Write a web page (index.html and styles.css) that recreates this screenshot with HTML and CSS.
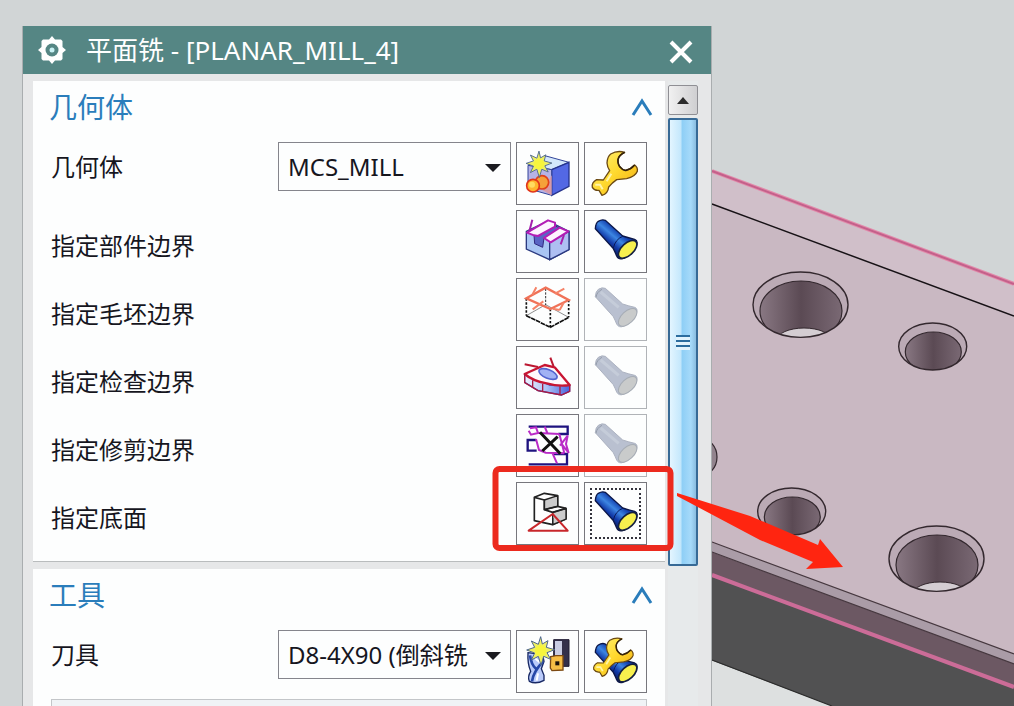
FILE: index.html
```html
<!DOCTYPE html>
<html lang="zh-CN">
<head>
<meta charset="utf-8">
<title>平面铣 - [PLANAR_MILL_4]</title>
<link rel="stylesheet" href="styles.css">
</head>
<body>
<svg class="defs" aria-hidden="true">
  <defs>
    <linearGradient id="barrel" x1="0.15" y1="0.7" x2="0.6" y2="0.2">
      <stop offset="0" stop-color="#081448"/><stop offset="0.35" stop-color="#123aa8"/><stop offset="0.6" stop-color="#3d86e2"/><stop offset="0.85" stop-color="#123fae"/>
    </linearGradient>
    <linearGradient id="gold" x1="0" y1="0" x2="1" y2="1">
      <stop offset="0" stop-color="#fff27a"/><stop offset="0.5" stop-color="#ffd92e"/><stop offset="1" stop-color="#f0a810"/>
    </linearGradient>
    <linearGradient id="blueside" x1="0" y1="0" x2="1" y2="0">
      <stop offset="0" stop-color="#f0f4ff"/><stop offset="0.5" stop-color="#a9c0f4"/><stop offset="1" stop-color="#4a62dc"/>
    </linearGradient>
    <linearGradient id="bore" x1="0" y1="0" x2="1" y2="0">
      <stop offset="0" stop-color="#897883"/><stop offset="0.5" stop-color="#5b4a54"/><stop offset="1" stop-color="#7a6974"/>
    </linearGradient>
    <symbol id="torch" viewBox="3 3 183 183">
      <path d="M34 56Q35 40 43 34Q54 27 64 31L116 78Q134 84 152 88Q162 92 158 104Q148 132 118 145Q104 150 98 138Q94 128 88 116Z" fill="url(#barrel)" stroke="#0c1748" stroke-width="4"/>
      <path d="M88 114Q94 88 116 79" fill="none" stroke="#0b1a5a" stroke-width="3"/>
      <ellipse cx="131" cy="118" rx="34" ry="18" transform="rotate(-43 131 118)" fill="#f7f04e" stroke="#152040" stroke-width="5"/>
    </symbol>
    <symbol id="torch-off" viewBox="3 3 183 183">
      <path d="M34 56Q35 40 43 34Q54 27 64 31L116 78Q134 84 152 88Q162 92 158 104Q148 132 118 145Q104 150 98 138Q94 128 88 116Z" fill="#b9c0d0" stroke="#adb3c1" stroke-width="3"/>
      <path d="M50 42L104 88" stroke="#c5ccd9" stroke-width="9" fill="none"/>
      <path d="M36 58Q38 42 54 34" stroke="#959dab" stroke-width="3" fill="none"/>
      <ellipse cx="131" cy="118" rx="34" ry="18" transform="rotate(-43 131 118)" fill="#c9cbcb" stroke="#a6acb5" stroke-width="3"/>
    </symbol>
    <symbol id="wrench" viewBox="3 3 183 183">
      <path d="M69 63Q70 44 80 36Q100 24 122 31Q104 40 102 53Q101 68 109 76Q118 87 126 85Q140 82 152 69Q162 76 160 88Q154 104 128 110L98 113Q85 122 74 135Q72 155 54 160L45 145Q32 147 25 136Q22 122 38 113L58 114L77 86Q70 76 69 63Z" fill="url(#gold)" stroke="#6b4a14" stroke-width="4" stroke-linejoin="round"/>
      <path d="M122 31Q104 40 102 53Q101 68 109 76Q118 87 126 85Q140 82 152 69" fill="none" stroke="#35230b" stroke-width="5"/>
      <path d="M82 95L68 118M34 128L48 128L56 142" stroke="#fff4a8" stroke-width="6" fill="none"/>
    </symbol>
    <symbol id="spark" viewBox="0 0 76 76" overflow="visible">
      <path d="M38 -4L43 18L60 8L55 28L80 35L57 44L68 64L47 55L39 82L31 55L10 66L20 45L-4 36L20 28L10 9L31 19Z" fill="#eef060" stroke="#4d6690" stroke-width="3"/>
      <circle cx="38" cy="38" r="17" fill="#f7f53c"/>
    </symbol>
    <symbol id="chevron" viewBox="0 0 22 18">
      <path d="M2 17L11 3L20 17" fill="none" stroke="#2a7dbb" stroke-width="3"/>
    </symbol>
  </defs>
</svg>

<svg class="scene" viewBox="0 0 1014 706" preserveAspectRatio="xMinYMin slice" role="img" aria-label="零件模型">
  <rect width="1014" height="706" fill="#d1d5d6"/>
  <path d="M600 618L832 706H600Z" fill="#dde0e0"/>
  <path d="M600 129L1014 284V706H832L600 618Z" fill="#515152"/>
  <path d="M600 129L1014 284V687L600 534Z" fill="#6c5863"/>
  <path d="M600 129L1014 284V664L600 511Z" fill="#aa9ca7"/>
  <path d="M600 129L1014 284V654L600 501Z" fill="#c9b8c2"/>
  <path d="M600 129L1014 284V316L600 162Z" fill="#d0bfc9"/>
  <path d="M712 171L1014 284" stroke="#e28bab" stroke-width="4"/>
  <path d="M712 171L1014 284" stroke="#c4608a" stroke-width="2"/>
  <path d="M712 204L1014 316" stroke="#171216" stroke-width="1.5"/>
  <path d="M712 542L1014 654M712 552L1014 664" stroke="#46383f" stroke-width="1.2"/>
  <path d="M712 575L1014 687" stroke="#cc6c98" stroke-width="4"/>
  <path d="M712 660L832 706" stroke="#2c2c2c" stroke-width="1.2"/>
  <ellipse cx="700" cy="457" rx="17" ry="19" fill="#92838d" stroke="#33282e" stroke-width="1.2"/>
  <clipPath id="c1"><ellipse cx="800.5" cy="304.7" rx="47.5" ry="32.7"/></clipPath>
  <clipPath id="c2"><ellipse cx="932.7" cy="346.5" rx="34" ry="23.5"/></clipPath>
  <g id="hole-large">
    <ellipse cx="800.5" cy="304.7" rx="47.5" ry="32.7" fill="#bbaab5"/>
    <g clip-path="url(#c1)">
      <ellipse cx="801" cy="311" rx="41" ry="30" fill="url(#bore)" stroke="#33282e" stroke-width="1.2"/>
      <ellipse cx="804" cy="340" rx="27" ry="12" fill="#d4cdd2" stroke="#33282e"/>
    </g>
    <ellipse cx="800.5" cy="304.7" rx="47.5" ry="32.7" fill="none" stroke="#33282e" stroke-width="1.4"/>
  </g>
  <g id="hole-small">
    <ellipse cx="932.7" cy="346.5" rx="34" ry="23.5" fill="#bbaab5"/>
    <g clip-path="url(#c2)">
      <ellipse cx="933.3" cy="352" rx="28" ry="20" fill="url(#bore)" stroke="#33282e" stroke-width="1.2"/>
    </g>
    <ellipse cx="932.7" cy="346.5" rx="34" ry="23.5" fill="none" stroke="#33282e" stroke-width="1.4"/>
  </g>
  <use href="#hole-large" x="136" y="254"/>
  <use href="#hole-small" x="-141" y="165"/>
</svg>

<div class="desktop">
  <main class="dialog">
    <header class="titlebar">
      <svg class="gear" viewBox="0 0 28 28" aria-hidden="true">
        <path d="M14 0L17 3.500L23 3.500L24.500 5L24.500 11L28 14L24.500 17L24.500 23L23 24.500L17 24.500L14 28L11 24.500L5 24.500L3.500 23L3.500 17L0 14L3.500 11L3.500 5L5 3.500L11 3.500Z" fill="#fff"/>
        <circle cx="14" cy="14" r="6.500" fill="#558684"/>
        <circle cx="14" cy="14" r="2.500" fill="#c8f1f4"/>
      </svg>
      <h1 class="title">平面铣 - [PLANAR_MILL_4]</h1>
      <button class="close" aria-label="关闭"><svg viewBox="0 0 24 24"><path d="M2 2L22 22M22 2L2 22" stroke="#fff" stroke-width="4"/></svg></button>
    </header>
    <div class="body">
      <div class="groups">
        <section class="group">
          <header class="group-head"><h2>几何体</h2><button class="fold" aria-label="折叠几何体"><svg><use href="#chevron"/></svg></button></header>
          <div class="row row-field">
            <label for="geometry">几何体</label>
            <span class="combo"><select id="geometry"><option>MCS_MILL</option></select></span>
            <button class="tool" aria-label="新建几何体"><svg viewBox="3 3 183 183">
              <path d="M36 70L90 42L159 61L107 83Z" fill="#d3e7fb" stroke="#33459a" stroke-width="3"/>
              <path d="M107 83L159 61V133L107 160Z" fill="#5368e4" stroke="#26338c" stroke-width="4"/>
              <path d="M36 70L107 83V160L36 140Z" fill="#b6b3e6" stroke="#33459a" stroke-width="3"/>
              <path d="M80 145L107 100V160Z" fill="#d89aa8"/>
              <circle cx="78" cy="121" r="20" fill="#f5a13a" stroke="#e0401a" stroke-width="5"/>
              <circle cx="51" cy="131" r="19" fill="#ffb52e" stroke="#e2351a" stroke-width="5"/>
              <circle cx="48" cy="128" r="9" fill="#ffdc61"/>
              <use href="#spark" x="34" y="28" width="70" height="76"/>
            </svg></button>
            <button class="tool" aria-label="编辑几何体"><svg><use href="#wrench"/></svg></button>
          </div>
          <div class="row">
            <span class="name">指定部件边界</span>
            <button class="tool" aria-label="选择部件边界"><svg viewBox="3 3 183 183">
              <path d="M31 64L96 33L159 64V119L101 149L31 117Z" fill="#a9c5f3" stroke="#2b3a80" stroke-width="4"/>
              <path d="M101 97V149L159 119V64Z" fill="#aebff2" stroke="#2b3a80" stroke-width="4"/>
              <path d="M54 76L117 48L131 53L84 84L80 112L56 101Z" fill="#5964c4" stroke="#322a80" stroke-width="3"/>
              <path d="M33 68L96 31L117 38V50L66 78L54 76Z" fill="#fdf4ff" stroke="#b31db5" stroke-width="6" stroke-linejoin="round"/>
              <path d="M84 84L131 53L157 64L104 97Z" fill="#fdf4ff" stroke="#b31db5" stroke-width="6" stroke-linejoin="round"/>
              <path d="M49 29L40 64M144 75L134 103" fill="none" stroke="#a51fad" stroke-width="6"/>
            </svg></button>
            <button class="tool" aria-label="显示部件边界"><svg><use href="#torch"/></svg></button>
          </div>
          <div class="row">
            <span class="name">指定毛坯边界</span>
            <button class="tool" aria-label="选择毛坯边界"><svg viewBox="3 3 183 183" fill="none">
              <path d="M31 113L89 80L158 118" stroke="#555" stroke-width="2"/>
              <path d="M31 113L103 148L158 118" stroke="#111" stroke-width="5" stroke-dasharray="14 2"/>
              <path d="M31 61V113M103 93V148M158 66V118" stroke="#111" stroke-width="5" stroke-dasharray="7 5"/>
              <path d="M89 32V82" stroke="#333" stroke-width="3" stroke-dasharray="7 4"/>
              <path d="M31 61L89 29L158 66L103 93Z" stroke="#f07258" stroke-width="7"/>
              <path d="M61 28L49 50M117 47L145 32M50 94L82 70M143 74L131 96M131 96L110 92" stroke="#f58368" stroke-width="6"/>
            </svg></button>
            <button class="tool" disabled aria-label="显示毛坯边界"><svg><use href="#torch-off"/></svg></button>
          </div>
          <div class="row">
            <span class="name">指定检查边界</span>
            <button class="tool" aria-label="选择检查边界"><svg viewBox="3 3 183 183">
              <path d="M26 84V109L66 134L136 147L161 136V117L101 117Z" fill="url(#blueside)" stroke="#3641aa" stroke-width="4"/>
              <path d="M26 84L86 57L116 64L161 117Q130 123 92 112Q50 105 26 84Z" fill="#fff8fb" stroke="#c81532" stroke-width="7" stroke-linejoin="round"/>
              <path d="M26 84V110L66 134L136 147L161 136V117M50 103V123M80 113V137M132 121V146" fill="none" stroke="#a91b43" stroke-width="4"/>
              <path d="M26 55L66 63M103 35L113 62" stroke="#bb1831" stroke-width="6"/>
              <ellipse cx="96" cy="84" rx="29" ry="13" transform="rotate(22 96 84)" fill="#a1b1f4" stroke="#5364cf" stroke-width="5"/>
            </svg></button>
            <button class="tool" disabled aria-label="显示检查边界"><svg><use href="#torch-off"/></svg></button>
          </div>
          <div class="row">
            <span class="name">指定修剪边界</span>
            <button class="tool" aria-label="选择修剪边界"><svg viewBox="3 3 183 183" fill="none">
              <path d="M38 38H155V60H127M60 78H35V110H62M38 151H153V120H112" stroke="#1e137f" stroke-width="7"/>
              <path d="M42 43L60 40L66 57L45 62L38 50M68 57L130 60M60 75L69 108L89 116L145 118M86 38L94 57M132 95L155 65L150 90L158 117L138 91M130 60L145 118M110 119L123 148" stroke="#b92bc7" stroke-width="6"/>
              <path d="M72 55L133 119M125 68L79 111" stroke="#111" stroke-width="9"/>
            </svg></button>
            <button class="tool" disabled aria-label="显示修剪边界"><svg><use href="#torch-off"/></svg></button>
          </div>
          <div class="row">
            <span class="name">指定底面</span>
            <button class="tool" aria-label="选择底面"><svg viewBox="3 3 183 183" stroke-linejoin="round">
              <path d="M55 46L85 34L125 41V73L150 79V111L110 128L55 116Z" fill="#fff" stroke="#222" stroke-width="5"/>
              <path d="M85 54L125 41V73L85 83ZM110 91L150 79V111L110 128Z" fill="#ccc" stroke="#222" stroke-width="4"/>
              <path d="M55 46L85 54V83L110 91L150 79M85 83L125 73" fill="none" stroke="#222" stroke-width="5"/>
              <path d="M110 96L155 146H38Z" fill="none" stroke="#c8272b" stroke-width="6"/>
              <path d="M110 108V128" stroke="#222" stroke-width="4"/>
            </svg></button>
            <button class="tool focused" aria-label="显示底面"><svg><use href="#torch"/></svg></button>
          </div>
        </section>
        <section class="group">
          <header class="group-head"><h2>工具</h2><button class="fold" aria-label="折叠工具"><svg><use href="#chevron"/></svg></button></header>
          <div class="row row-field">
            <label for="cutter">刀具</label>
            <span class="combo"><select id="cutter"><option>D8-4X90 (倒斜铣</option></select></span>
            <button class="tool" aria-label="新建刀具"><svg viewBox="3 3 183 183">
              <path d="M113 29H159V109H113Z" fill="#34304b" stroke="#201c33" stroke-width="3"/>
              <path d="M117 33H138V84H117Z" fill="#c9cce3"/>
              <path d="M104 80L120 77H141V120L108 122L103 114Z" fill="#f6bd45" stroke="#7c4a14" stroke-width="4"/>
              <rect x="118" y="94" width="12" height="12" fill="#1c120c"/>
              <path d="M36 68L80 74L84 94L76 116L84 136V151Q60 164 40 154Q34 140 44 124Q34 100 36 68Z" fill="#bacbfa" stroke="#172864" stroke-width="4"/>
              <path d="M42 76Q46 105 60 116M81 94Q51 127 48 154" fill="none" stroke="#2647a7" stroke-width="8"/>
              <path d="M56 84L73 98M66 130L62 152" stroke="#fff" stroke-width="6"/>
              <use href="#spark" x="36" y="24" width="76" height="76"/>
            </svg></button>
            <button class="tool" aria-label="编辑刀具"><svg viewBox="3 3 183 183">
              <use href="#torch" x="3" y="14" width="183" height="183"/>
              <use href="#wrench" x="10" y="2" width="160" height="160"/>
            </svg></button>
          </div>
          <div class="subpanel"></div>
        </section>
      </div>
      <div class="scrollbar">
        <button class="scroll-up" aria-label="向上滚动"></button>
        <div class="thumb"><span class="grip"></span></div>
      </div>
    </div>
  </main>
</div>

<svg class="markup" viewBox="0 0 1014 706" preserveAspectRatio="xMinYMin slice" aria-hidden="true">
  <rect x="495.500" y="469" width="175" height="79" rx="4" fill="none" stroke="#ec2a1e" stroke-width="6"/>
  <path d="M677 493L750 516L818 545L820 539L843 567L806 569L813 562L760 540L677 496Z" fill="#ff2510"/>
</svg>
</body>
</html>
```
FILE: styles.css
```css
* { box-sizing: border-box; }

body {
  margin: 0;
  height: 100vh;
  overflow: hidden;
  background: #d0d4d5;
  color: #16161e;
  font: 24px/32px "Noto Sans", "Noto Sans CJK SC", sans-serif;
}

h1, h2 { margin: 0; font-weight: 400; }

button {
  padding: 0;
  border: 0;
  background: none;
}

svg { display: block; }

.defs { position: absolute; width: 0; height: 0; }

.scene, .markup {
  position: absolute;
  top: 0;
  left: 0;
  width: 100%;
  height: 100%;
}

.markup { pointer-events: none; }

.desktop {
  position: relative;
  display: grid;
  grid-template-columns: minmax(0, 690fr) 302fr;
  height: 100vh;
  padding: 26px 0 0 22px;
}

.dialog {
  display: flex;
  flex-direction: column;
  min-height: 0;
  overflow: hidden;
  background: #e6e7e8;
  border: solid #a9adaf;
  border-width: 0 1px;
}

.titlebar {
  display: flex;
  flex: none;
  align-items: center;
  height: 48px;
  margin: 0 -1px;
  padding: 0 19px 0 16px;
  background: #558684;
  color: #fff;
}

.gear { width: 28px; height: 28px; }

.title {
  flex: 1;
  margin-left: 20px;
  font-size: 26px;
}

.close svg { width: 24px; height: 24px; margin-top: 4px; }

.body {
  display: flex;
  flex: 1;
  gap: 3px;
  min-height: 0;
  padding: 7px 13px 0 10px;
}

.groups {
  display: flex;
  flex: 1;
  flex-direction: column;
  gap: 7px;
  min-width: 0;
}

.group {
  flex: none;
  padding: 8px 18px 16px;
  background: #fdfefe;
  border-bottom: 1px solid #b9bcbd;
}

.group-head {
  display: flex;
  align-items: center;
  justify-content: space-between;
  height: 36px;
  margin: 0 -6px 17px -2px;
  color: #2a7dbb;
}

.group-head h2 { font-size: 28px; }

.fold svg { width: 22px; height: 18px; }

.row {
  display: flex;
  align-items: center;
  gap: 5px;
  height: 63px;
  margin-bottom: 5px;
}

.name, .row label { flex: 1; }

.name { padding-top: 8px; }

.row:last-child { margin-bottom: 0; }

.row-field { align-items: flex-start; }

.row-field label { line-height: 49px; }

.combo {
  position: relative;
  width: 233px;
}

.combo::after {
  content: "";
  position: absolute;
  top: 22px;
  right: 10px;
  border: solid transparent;
  border-width: 8px 8px 0;
  border-top-color: #1b1b20;
  pointer-events: none;
}

.combo select {
  display: block;
  width: 100%;
  height: 49px;
  padding: 0 36px 0 9px;
  border: 1px solid #85858c;
  border-radius: 0;
  appearance: none;
  background: #fdfefe;
  color: inherit;
  font: inherit;
}

.tool {
  position: relative;
  flex: none;
  width: 63px;
  height: 63px;
  border: 1px solid #77777d;
  background: #fdfefe;
}

.tool:disabled { border-color: #b0b3b7; }

.tool svg { width: 100%; height: 100%; }

.focused::after {
  content: "";
  position: absolute;
  inset: 5px;
  border: 2px dotted #33333d;
}

.subpanel {
  height: 60px;
  margin-top: 6px;
  border: 1px solid #c3c6c9;
  background: #f0f3f6;
}

.scrollbar {
  display: flex;
  flex-direction: column;
  gap: 3px;
  width: 30px;
  padding-top: 4px;
  background: #e7eaeb;
}

.scroll-up {
  display: grid;
  place-items: center;
  height: 30px;
  border: 1px solid #8f8f94;
  border-radius: 2px;
  background: linear-gradient(90deg, #f1f1f1, #cfcfd1);
}

.scroll-up::after {
  content: "";
  border: solid transparent;
  border-width: 0 6px 7px;
  border-bottom-color: #2b2b2b;
}

.thumb {
  display: grid;
  place-items: center;
  height: 448px;
  border: 2px solid #376a96;
  border-radius: 2px;
  background: linear-gradient(90deg, #e3f5ff 0, #c5e8fc 40%, #8fcff6 48%, #a6dafa 80%, #8abde0 100%);
}

.grip {
  width: 14px;
  height: 15px;
  background: repeating-linear-gradient(#2c6d9e 0 2px, #e2f3fc 2px 5px);
}
```
